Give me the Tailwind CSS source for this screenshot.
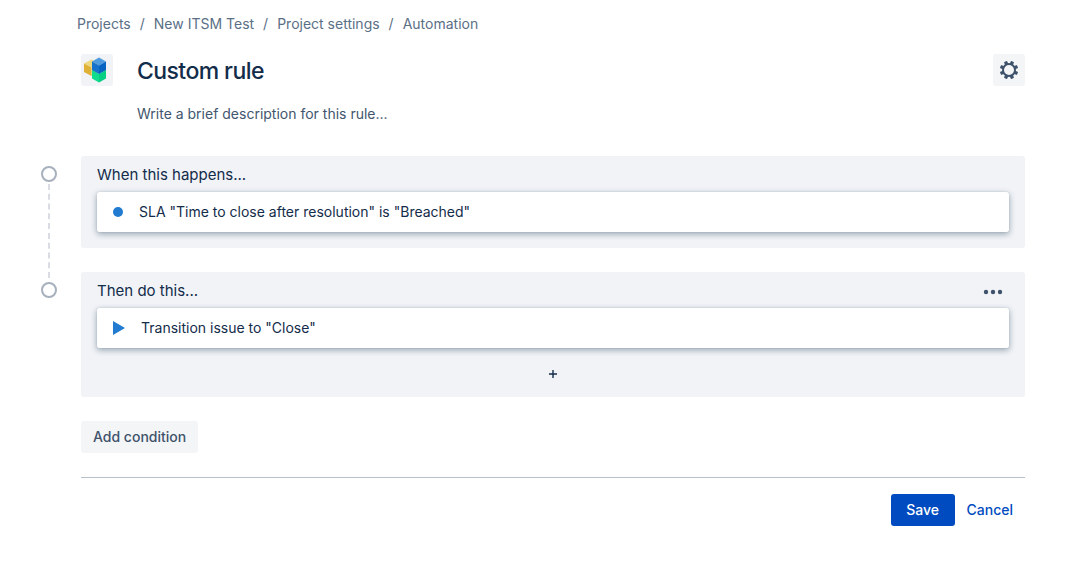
<!DOCTYPE html>
<html lang="en">
<head>
    <meta charset="UTF-8">
    <meta name="viewport" content="width=device-width, initial-scale=1.0">
    <title>Custom rule - Automation</title>
    <script src="https://cdn.jsdelivr.net/npm/@tailwindcss/browser@4"></script>
</head>
<body class="bg-white min-h-screen font-['Inter','Liberation_Sans',sans-serif] text-sm text-[#132c4a]">
    <div class="pl-[41px] pr-[59px] pt-3.5 pb-10">
        <nav aria-label="Breadcrumb" class="pl-9">
            <ol class="flex items-center gap-[9px] text-[#5b6f86]">
                <li><a href="#" class="hover:underline">Projects</a></li>
                <li aria-hidden="true">/</li>
                <li><a href="#" class="hover:underline">New ITSM Test</a></li>
                <li aria-hidden="true">/</li>
                <li><a href="#" class="hover:underline">Project settings</a></li>
                <li aria-hidden="true">/</li>
                <li><a href="#" class="hover:underline">Automation</a></li>
            </ol>
        </nav>

        <main class="mt-5">
            <header class="ml-10 flex items-start">
                <div class="size-8 shrink-0 rounded-[3px] bg-[#f1f3f7]">
                    <svg class="size-8" viewBox="0 0 32 32" aria-hidden="true">
                        <path d="M3 9.500 10.500 5.500 18 9.500 10.500 13.500Z" fill="#ecd97f"/>
                        <path d="M3 9.500 10.500 13.500V22L3 18Z" fill="#dfb136"/>
                        <path d="M10.500 13.500 18 9.500V18L10.500 22Z" fill="#e8cb5c"/>
                        <path d="M11 16 18 12.500 25 16 18 20Z" fill="#36e8a0"/>
                        <path d="M11 16 18 20V28.500L11 24.500Z" fill="#0fdc8c"/>
                        <path d="M18 20 25 16V24.500L18 28.500Z" fill="#04cf83"/>
                        <path d="M11 7.500 18 3.500 25 7.500 18 11.500Z" fill="#4f9be0"/>
                        <path d="M11 7.500 18 11.500V20L11 16Z" fill="#1672cc"/>
                        <path d="M18 11.500 25 7.500V16L18 20Z" fill="#0864c0"/>
                    </svg>
                </div>
                <div class="ml-6 flex-1">
                    <h1 class="pt-px text-[23px] leading-8 font-medium tracking-tight">Custom rule</h1>
                    <p class="mt-[17px] text-[#42566e]">Write a brief description for this rule...</p>
                </div>
                <button type="button" aria-label="Rule settings" class="size-8 rounded-[3px] bg-[#f3f5f7] text-[#3f526b] flex items-center justify-center hover:bg-[#ebecf0]">
                    <svg class="size-5" viewBox="0 0 20 20" fill="currentColor" aria-hidden="true">
                        <circle cx="10" cy="10" r="6" fill="none" stroke="currentColor" stroke-width="2"/>
                        <g id="teeth">
                            <rect x="8.300" y="0.800" width="3.400" height="3.200" rx="0.600" transform="rotate(22.5 10 10)"/>
                            <rect x="8.300" y="0.800" width="3.400" height="3.200" rx="0.600" transform="rotate(67.5 10 10)"/>
                            <rect x="8.300" y="0.800" width="3.400" height="3.200" rx="0.600" transform="rotate(112.5 10 10)"/>
                            <rect x="8.300" y="0.800" width="3.400" height="3.200" rx="0.600" transform="rotate(157.5 10 10)"/>
                        </g>
                        <use href="#teeth" transform="rotate(180 10 10)"/>
                    </svg>
                </button>
            </header>

            <!-- Rule steps -->
            <div class="mt-8">
                <section class="flex">
                    <div class="w-4 mr-6 pt-2.5 flex flex-col items-center">
                        <span class="size-4 shrink-0 rounded-full border-2 border-[#a7b0bd]"></span>
                        <span class="mt-0.5 -mb-1.5 flex-1 border-l-2 border-dashed border-[#d9dce2]"></span>
                    </div>
                    <div class="flex-1 mb-6 px-4 pb-4 rounded-[3px] bg-[#f1f3f7]">
                        <h2 class="h-9 pt-px text-[15px] leading-9">When this happens...</h2>
                        <div class="h-10 pl-4 flex items-center rounded-xs bg-white shadow-[0_2px_6px_rgba(9,40,66,0.4),0_0_1px_rgba(9,40,66,0.3)]">
                            <svg class="w-2.5 h-2.5 mr-4" viewBox="0 0 10 10" aria-hidden="true"><circle cx="5" cy="5" r="5" fill="#217bd0"/></svg>
                            SLA "Time to close after resolution" is "Breached"
                        </div>
                    </div>
                </section>

                <section class="flex">
                    <div class="w-4 mr-6 pt-2.5">
                        <span class="block size-4 rounded-full border-2 border-[#a7b0bd]"></span>
                    </div>
                    <div class="flex-1 px-4 rounded-[3px] bg-[#f1f3f7]">
                        <div class="h-9 flex items-start justify-between">
                            <h2 class="pt-px text-[15px] leading-9">Then do this...</h2>
                            <button type="button" aria-label="More actions" class="w-8 h-6 mt-2 text-[#3f526b] flex items-center justify-center">
                                <svg class="w-5 h-4" viewBox="0 0 20 16" fill="currentColor" aria-hidden="true">
                                    <circle cx="3" cy="8" r="2.200"/>
                                    <circle cx="10" cy="8" r="2.200"/>
                                    <circle cx="17" cy="8" r="2.200"/>
                                </svg>
                            </button>
                        </div>
                        <div class="h-10 pl-4 flex items-center rounded-xs bg-white shadow-[0_2px_6px_rgba(9,40,66,0.4),0_0_1px_rgba(9,40,66,0.3)]">
                            <svg class="w-3 h-3.5 mr-4" viewBox="0 0 12 14" aria-hidden="true"><path d="M0 0 12 7 0 14Z" fill="#217bd0"/></svg>
                            Transition issue to "Close"
                        </div>
                        <button type="button" aria-label="Add action" class="w-full h-[49px] pt-0.5 flex items-center justify-center">
                            <svg class="size-2" viewBox="0 0 8 8" aria-hidden="true"><path d="M4 0V8M0 4H8" stroke="#132c4a" stroke-width="1.400"/></svg>
                        </button>
                    </div>
                </section>
            </div>

            <div class="ml-10">
                <button type="button" class="mt-6 h-8 px-3 rounded-[3px] bg-[#f3f5f7] text-[#3f526b] font-medium hover:bg-[#ebecf0]">Add condition</button>
                <div class="mt-6 pt-4 border-t border-[#b7bfc9] flex justify-end">
                    <button type="button" class="h-8 w-16 rounded-[3px] bg-[#004bbf] text-white font-medium hover:bg-[#0065ff]">Save</button>
                    <button type="button" class="h-8 px-3 text-[#004bbf] font-medium hover:underline">Cancel</button>
                </div>
            </div>
        </main>
    </div>
</body>
</html>
